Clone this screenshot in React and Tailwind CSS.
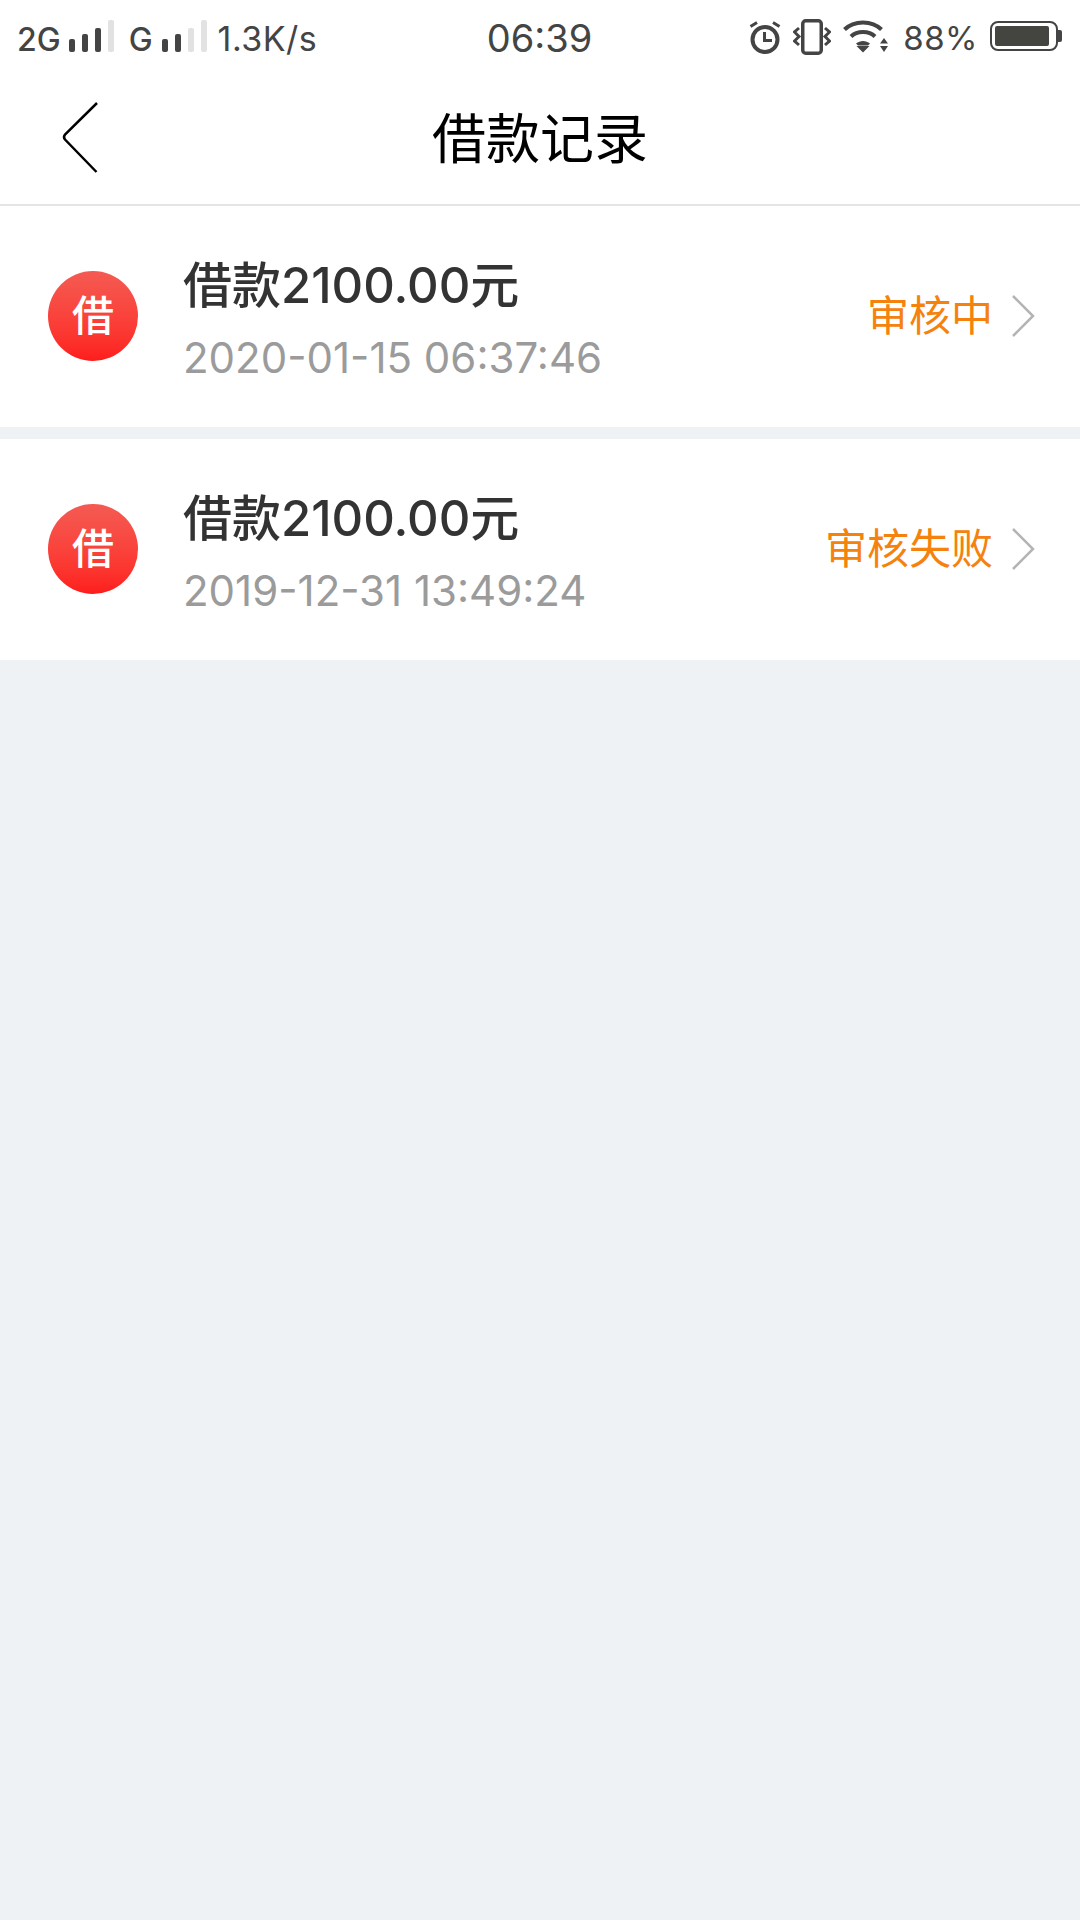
import React from "react";

const cjk = "font-['Inter','Noto_Sans_CJK_SC',sans-serif]";

const records = [
  { id: 1, title: "借款2100.00元", time: "2020-01-15 06:37:46", status: "审核中" },
  { id: 2, title: "借款2100.00元", time: "2019-12-31 13:49:24", status: "审核失败" },
];

const Bars = ({ on, className }) => {
  const heights = [13, 18, 24, 32];
  return (
    <div className={`flex items-end gap-[7px] ${className}`}>
      {heights.map((h, i) => (
        <div
          key={i}
          className={`w-[6px] rounded-[2px] ${i < on ? "bg-[#444444]" : "bg-[#e2e2e2]"}`}
          style={{ height: h }}
        />
      ))}
    </div>
  );
};

const StatusBar = () => (
  <div className="flex h-[75px] items-center pl-[17px] pr-[18px] pt-[2px] text-[#444444] font-['Inter','Noto_Sans',sans-serif]">
    <div className="flex flex-1 items-center">
      <span className="mt-[3px] text-[32px] font-medium">2G</span>
      <Bars on={3} className="ml-[8px] h-[32px] mb-[5px]" />
      <span className="ml-[15px] mt-[3px] text-[32px] font-medium">G</span>
      <Bars on={2} className="ml-[9px] h-[32px] mb-[5px]" />
      <span className="ml-[11px] text-[34px] tracking-[0.5px]">1.3K/s</span>
    </div>
    <span className="text-[38px]">06:39</span>
    <div className="flex flex-1 items-center justify-end">
      <svg width="32" height="34" viewBox="0 0 32 34" fill="none" stroke="#444444" className="-mt-[3px]">
        <circle cx="16" cy="19.500" r="12.500" strokeWidth="4" />
        <path d="M15.500 12V20.500H23" strokeWidth="3" />
        <path d="M1.500 6.500L8 2.500M30.500 6.500L24 2.500" strokeWidth="3" />
      </svg>
      <svg className="ml-[12px] -mt-[4px]" width="38" height="36" viewBox="0 0 38 36" fill="none" stroke="#444444">
        <rect x="9.750" y="1.750" width="18.500" height="32.500" rx="3" strokeWidth="3.500" />
        <path d="M6 9L1.500 13L6 17.500L1.500 22L6 26" strokeWidth="3" />
        <path d="M32 9L36.500 13L32 17.500L36.500 22L32 26" strokeWidth="3" />
      </svg>
      <svg className="ml-[12px] -mt-[4px]" width="46" height="33" viewBox="0 0 46 33" fill="none">
        <path d="M1.500 9.500C11 0 29 0 38.500 9.500" stroke="#444444" strokeWidth="4" />
        <path d="M8 16.500C14 10.500 26 10.500 32 16.500" stroke="#444444" strokeWidth="4" />
        <path d="M13 23.500L15 25.500H25L27 23.500C23 20 17 20 13 23.500Z" fill="#444444" />
        <path d="M13.500 26H26.500L20 32.500Z" fill="#444444" />
        <path d="M41 18L45 23.500H37ZM37 26H45L41 32Z" fill="#444444" />
      </svg>
      <span className="ml-[14px] text-[33px] tracking-[0.5px]">88%</span>
      <div className="ml-[12px] -mt-[5px] flex items-center">
        <div className="flex h-[30px] w-[68px] items-center rounded-[8px] border-[2px] border-[#444444] py-[3px] pl-[3px] pr-[7px]">
          <div className="h-full w-full rounded-[2px] bg-[#444440]" />
        </div>
        <div className="h-[12px] w-[4px] rounded-r-[2px] bg-[#444444]" />
      </div>
    </div>
  </div>
);

const NavBar = () => (
  <div className="relative flex h-[131px] items-center justify-center border-b-2 border-[#e3e5e6] bg-white">
    <svg className="absolute left-[60px] top-[26px]" width="40" height="74" viewBox="0 0 40 74" fill="none">
      <path d="M37 2L5 33.500Q3 36 5 38.500L36.500 71" stroke="#000000" strokeWidth="2.500" />
    </svg>
    <h1 className={`text-[54px] leading-none text-black font-normal ${cjk}`}>借款记录</h1>
  </div>
);

const RecordRow = ({ item }) => (
  <div className="flex h-[221px] items-center bg-white pl-[48px] pr-[44px]">
    <div className={`-mt-[2px] flex h-[90px] w-[90px] shrink-0 items-center justify-center rounded-full bg-gradient-to-b from-[#f45a52] to-[#fe1c1c] text-[42px] font-medium leading-none text-white ${cjk}`}>
      借
    </div>
    <div className="ml-[45px] flex-1 pt-[5px]">
      <p className={`text-[49px] font-medium leading-[60px] text-[#333333] ${cjk}`}>{item.title}</p>
      <p className={`mt-[17px] text-[42px] leading-[50px] text-[#9b9b9b] ${cjk}`}>{item.time}</p>
    </div>
    <span className={`-mt-[1px] text-[42px] leading-none text-[#f5820d] ${cjk}`}>{item.status}</span>
    <svg className="ml-[17px] -mt-[2px]" width="26" height="44" viewBox="0 0 26 44" fill="none">
      <path d="M3 2L23 22L3 42" stroke="#b4b4b4" strokeWidth="2.500" />
    </svg>
  </div>
);

export default function App() {
  return (
    <div className="flex min-h-[1920px] w-[1080px] flex-col bg-[#eef2f5]">
      <div className="bg-white">
        <StatusBar />
        <NavBar />
      </div>
      <div className="flex flex-col gap-[12px]">
        {records.map((item) => (
          <RecordRow key={item.id} item={item} />
        ))}
      </div>
    </div>
  );
}
